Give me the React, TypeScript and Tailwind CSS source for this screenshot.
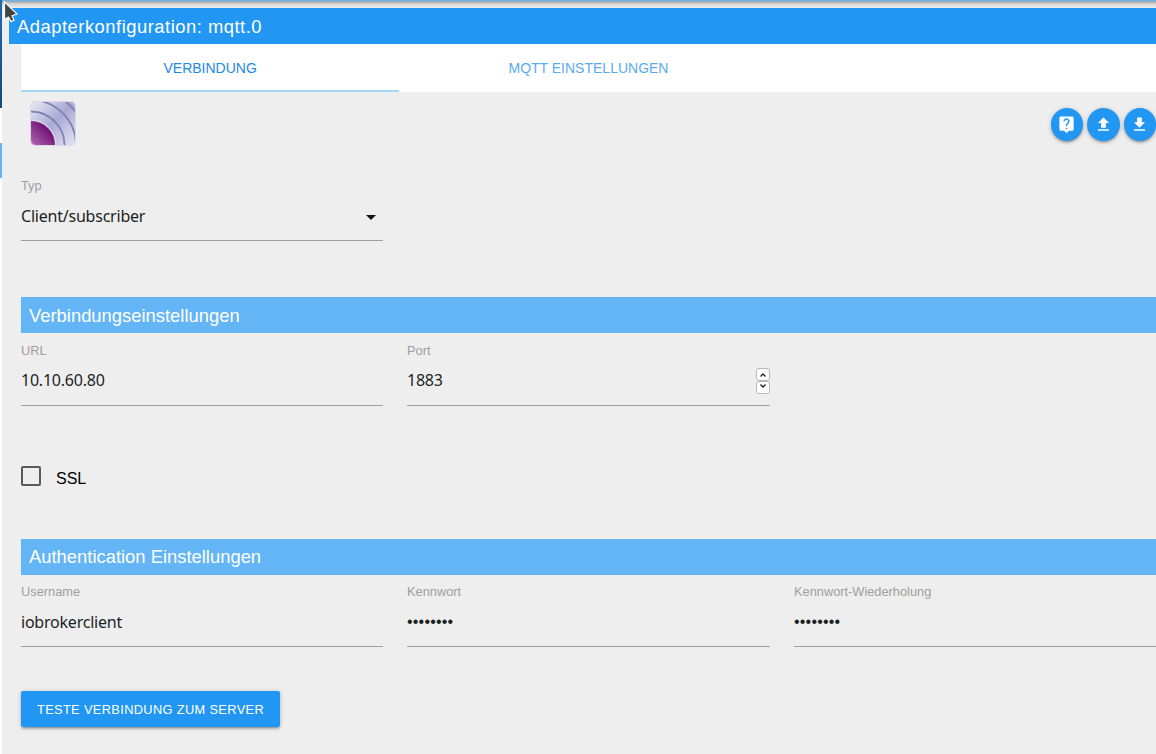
import React from 'react';

interface FieldProps {
  label: string;
  value: string;
  password?: boolean;
  raised?: boolean;
  children?: React.ReactNode;
}

const Field: React.FC<FieldProps> = ({ label, value, password, raised, children }) => {
  return (
    <div className="h-[65px] border-b border-[#9e9e9e] flex flex-col">
      <label className="h-5 text-[12.8px] leading-[20px] text-[#9e9e9e]">{label}</label>
      <div className={raised ? 'h-[38px] flex items-center justify-between text-[#1c1f1f]' : 'h-[40px] flex items-center justify-between text-[#1c1f1f]'}>
        {password ? (
          <span className="font-['Liberation_Sans'] text-[16px] tracking-[0.2px]">{value}</span>
        ) : (
          <span className="font-['Noto_Sans','Open_Sans',sans-serif] text-[16px] leading-[24px] tracking-[-0.22px]">{value}</span>
        )}
        {children}
      </div>
    </div>
  );
};

const SectionTitle: React.FC<{ title: string; className: string }> = ({ title, className }) => {
  return <div className={`h-9 bg-[#64b5f6] pl-2 text-[18.4px] text-white ${className}`}>{title}</div>;
};

const RoundButton: React.FC<{ title: string; path: string }> = ({ title, path }) => {
  return (
    <button
      title={title}
      className="w-[32.5px] h-[32.5px] shrink-0 rounded-full bg-[#2196f3] flex items-center justify-center shadow-[0_2px_2px_0_rgba(0,0,0,0.14),0_3px_1px_-2px_rgba(0,0,0,0.12),0_1px_5px_0_rgba(0,0,0,0.2)]"
    >
      <svg width="19" height="19" viewBox="0 0 24 24" fill="#fff"><path d={path} /></svg>
    </button>
  );
};

const icons = {
  help: 'M19 2H5c-1.11 0-2 .9-2 2v14c0 1.1.89 2 2 2h4l3 3 3-3h4c1.1 0 2-.9 2-2V4c0-1.1-.9-2-2-2zm-6 16h-2v-2h2v2zm2.07-7.75l-.9.92C13.45 11.9 13 12.5 13 14h-2v-.5c0-1.1.45-2.1 1.17-2.83l1.24-1.26c.37-.36.59-.86.59-1.41 0-1.1-.9-2-2-2s-2 .9-2 2H8c0-2.21 1.79-4 4-4s4 1.79 4 4c0 .88-.36 1.68-.93 2.25z',
  upload: 'M9 16h6v-6h4l-7-7-7 7h4zm-4 2h14v2H5z',
  download: 'M19 9h-4V3H9v6H5l7 7 7-7zM5 18v2h14v-2H5z',
};

const MqttLogo = () => (
  <svg width="48" height="48" viewBox="0 0 48 48">
    <defs>
      <linearGradient id="logoBg" x1="0" y1="0" x2="1" y2="1">
        <stop offset="0.1" stopColor="#e0e0f0" />
        <stop offset="0.5" stopColor="#aaa8d4" />
        <stop offset="0.9" stopColor="#dcdaee" />
      </linearGradient>
      <linearGradient id="logoCore" x1="0" y1="1" x2="0.75" y2="0.25">
        <stop offset="0" stopColor="#b46cb6" />
        <stop offset="1" stopColor="#6a0a6c" />
      </linearGradient>
      <clipPath id="logoClip"><rect x="2" y="2" width="44" height="43.5" rx="5" /></clipPath>
    </defs>
    <rect x="1" y="1" width="45.5" height="44.5" rx="5.5" fill="url(#logoBg)" />
    <g clipPath="url(#logoClip)" fill="none" stroke="#8080b4" strokeWidth="1.8">
      <circle cx="2" cy="45" r="55.5" />
      <circle cx="2" cy="45" r="45" />
      <circle cx="2" cy="45" r="33.5" />
      <circle cx="2" cy="45" r="24.5" stroke="#dcdcee" strokeWidth="1.5" />
      <path d="M2 21A24 24 0 0 1 26 45v1H2z" fill="url(#logoCore)" stroke="none" />
    </g>
    <rect x="1.5" y="1.5" width="45" height="44" rx="5.5" fill="none" stroke="#e0d6ea" />
  </svg>
);

export default function App() {
  return (
    <div className="relative w-[1156px] h-[754px] overflow-hidden flex bg-white font-['Liberation_Sans',Arial,sans-serif]">
      {/* page behind the dialog */}
      <div className="w-[2px] shrink-0 flex flex-col">
        <div className="h-[108px] bg-linear-to-b from-[#1e6bb0] to-[#154a7c]" />
        <div className="h-[35px] bg-white" />
        <div className="h-[35px] bg-[#64b5f6]" />
      </div>

      <div className="flex-1 min-w-0 bg-[#eeeeee]">
        <div className="h-2 bg-linear-to-b from-[#989ca0] via-[#d4d4d4] via-40% to-[#eeeeee] border-t border-[#64b5f6]" />
        <div className="ml-[7px] h-9 bg-[#2196f3] pl-2 text-[18.4px] leading-[37px] tracking-[0.5px] text-white">
          Adapterkonfiguration: mqtt.0
        </div>

        <div className="ml-[19px]">
          {/* tabs */}
          <div className="h-12 bg-white grid grid-cols-3 text-center text-[14px] leading-[48px]">
            <div className="h-12 border-b-2 border-[#a6d8f8] text-[#1e88e5]">VERBINDUNG</div>
            <div className="text-[#5aaaec]">MQTT EINSTELLUNGEN</div>
          </div>

          <div className="h-[84px] pl-2 pt-2 flex justify-between">
            <MqttLogo />
            <div className="flex gap-1 pt-2">
              <RoundButton title="Hilfe" path={icons.help} />
              <RoundButton title="Hochladen" path={icons.upload} />
              <RoundButton title="Herunterladen" path={icons.download} />
            </div>
          </div>

          <div className="grid grid-cols-[362px_363px_363px] gap-x-6">
            <Field label="Typ" value="Client/subscriber">
              <svg className="mr-[7px] mt-[2px]" width="10" height="5" viewBox="0 0 10 5"><path d="M0 0h10L5 5z" fill="#111" /></svg>
            </Field>
          </div>

          <div className="h-[56px]" />
          <SectionTitle title="Verbindungseinstellungen" className="leading-[37px]" />
          <div className="mt-2 grid grid-cols-[362px_363px_363px] gap-x-6">
            <Field label="URL" value="10.10.60.80" raised />
            <Field label="Port" value="1883" raised>
              <div className="flex flex-col mt-[2px]">
                <div className="w-[14px] h-[13px] bg-white border border-[#b8b8b8] rounded-[3px] flex items-center justify-center">
                  <svg width="6" height="4" viewBox="0 0 6 4" fill="none" stroke="#222" strokeWidth="1.4"><path d="M.5 3.5L3 1l2.5 2.5" /></svg>
                </div>
                <div className="w-[14px] h-[13px] bg-white border border-[#b8b8b8] rounded-[3px] flex items-start pt-[2px] justify-center">
                  <svg width="6" height="4" viewBox="0 0 6 4" fill="none" stroke="#222" strokeWidth="1.4"><path d="M.5 .5L3 3l2.5-2.5" /></svg>
                </div>
              </div>
            </Field>
          </div>

          <div className="mt-[60px] h-[73px] flex items-start">
            <div className="w-5 h-5 border-2 border-[#5a5a5a] rounded-[2px]" />
            <span className="ml-[15px] text-[16px] leading-[25px] text-black">SSL</span>
          </div>

          <SectionTitle title="Authentication Einstellungen" className="leading-[36px]" />
          <div className="mt-[7px] grid grid-cols-[362px_363px_363px] gap-x-6">
            <Field label="Username" value="iobrokerclient" />
            <Field label="Kennwort" value="••••••••" password />
            <Field label="Kennwort-Wiederholung" value="••••••••" password />
          </div>

          <button className="mt-11 w-[259px] h-9 rounded-[2px] bg-[#2196f3] text-[12.8px] leading-[37px] tracking-[0.36px] text-white whitespace-nowrap shadow-[0_2px_2px_0_rgba(0,0,0,0.14),0_3px_1px_-2px_rgba(0,0,0,0.12),0_1px_5px_0_rgba(0,0,0,0.2)]">
            TESTE VERBINDUNG ZUM SERVER
          </button>
        </div>
      </div>

      {/* mouse pointer */}
      <svg className="absolute left-[3px] top-0" width="16" height="24" viewBox="0 0 16 24">
        <path d="M1.5 1.8v17.4l4-2.2 2.5 4.6 3-1.6-2-4.2 5-1.8z" fill="#424242" stroke="#fff" strokeWidth="1.2" />
      </svg>
    </div>
  );
}
